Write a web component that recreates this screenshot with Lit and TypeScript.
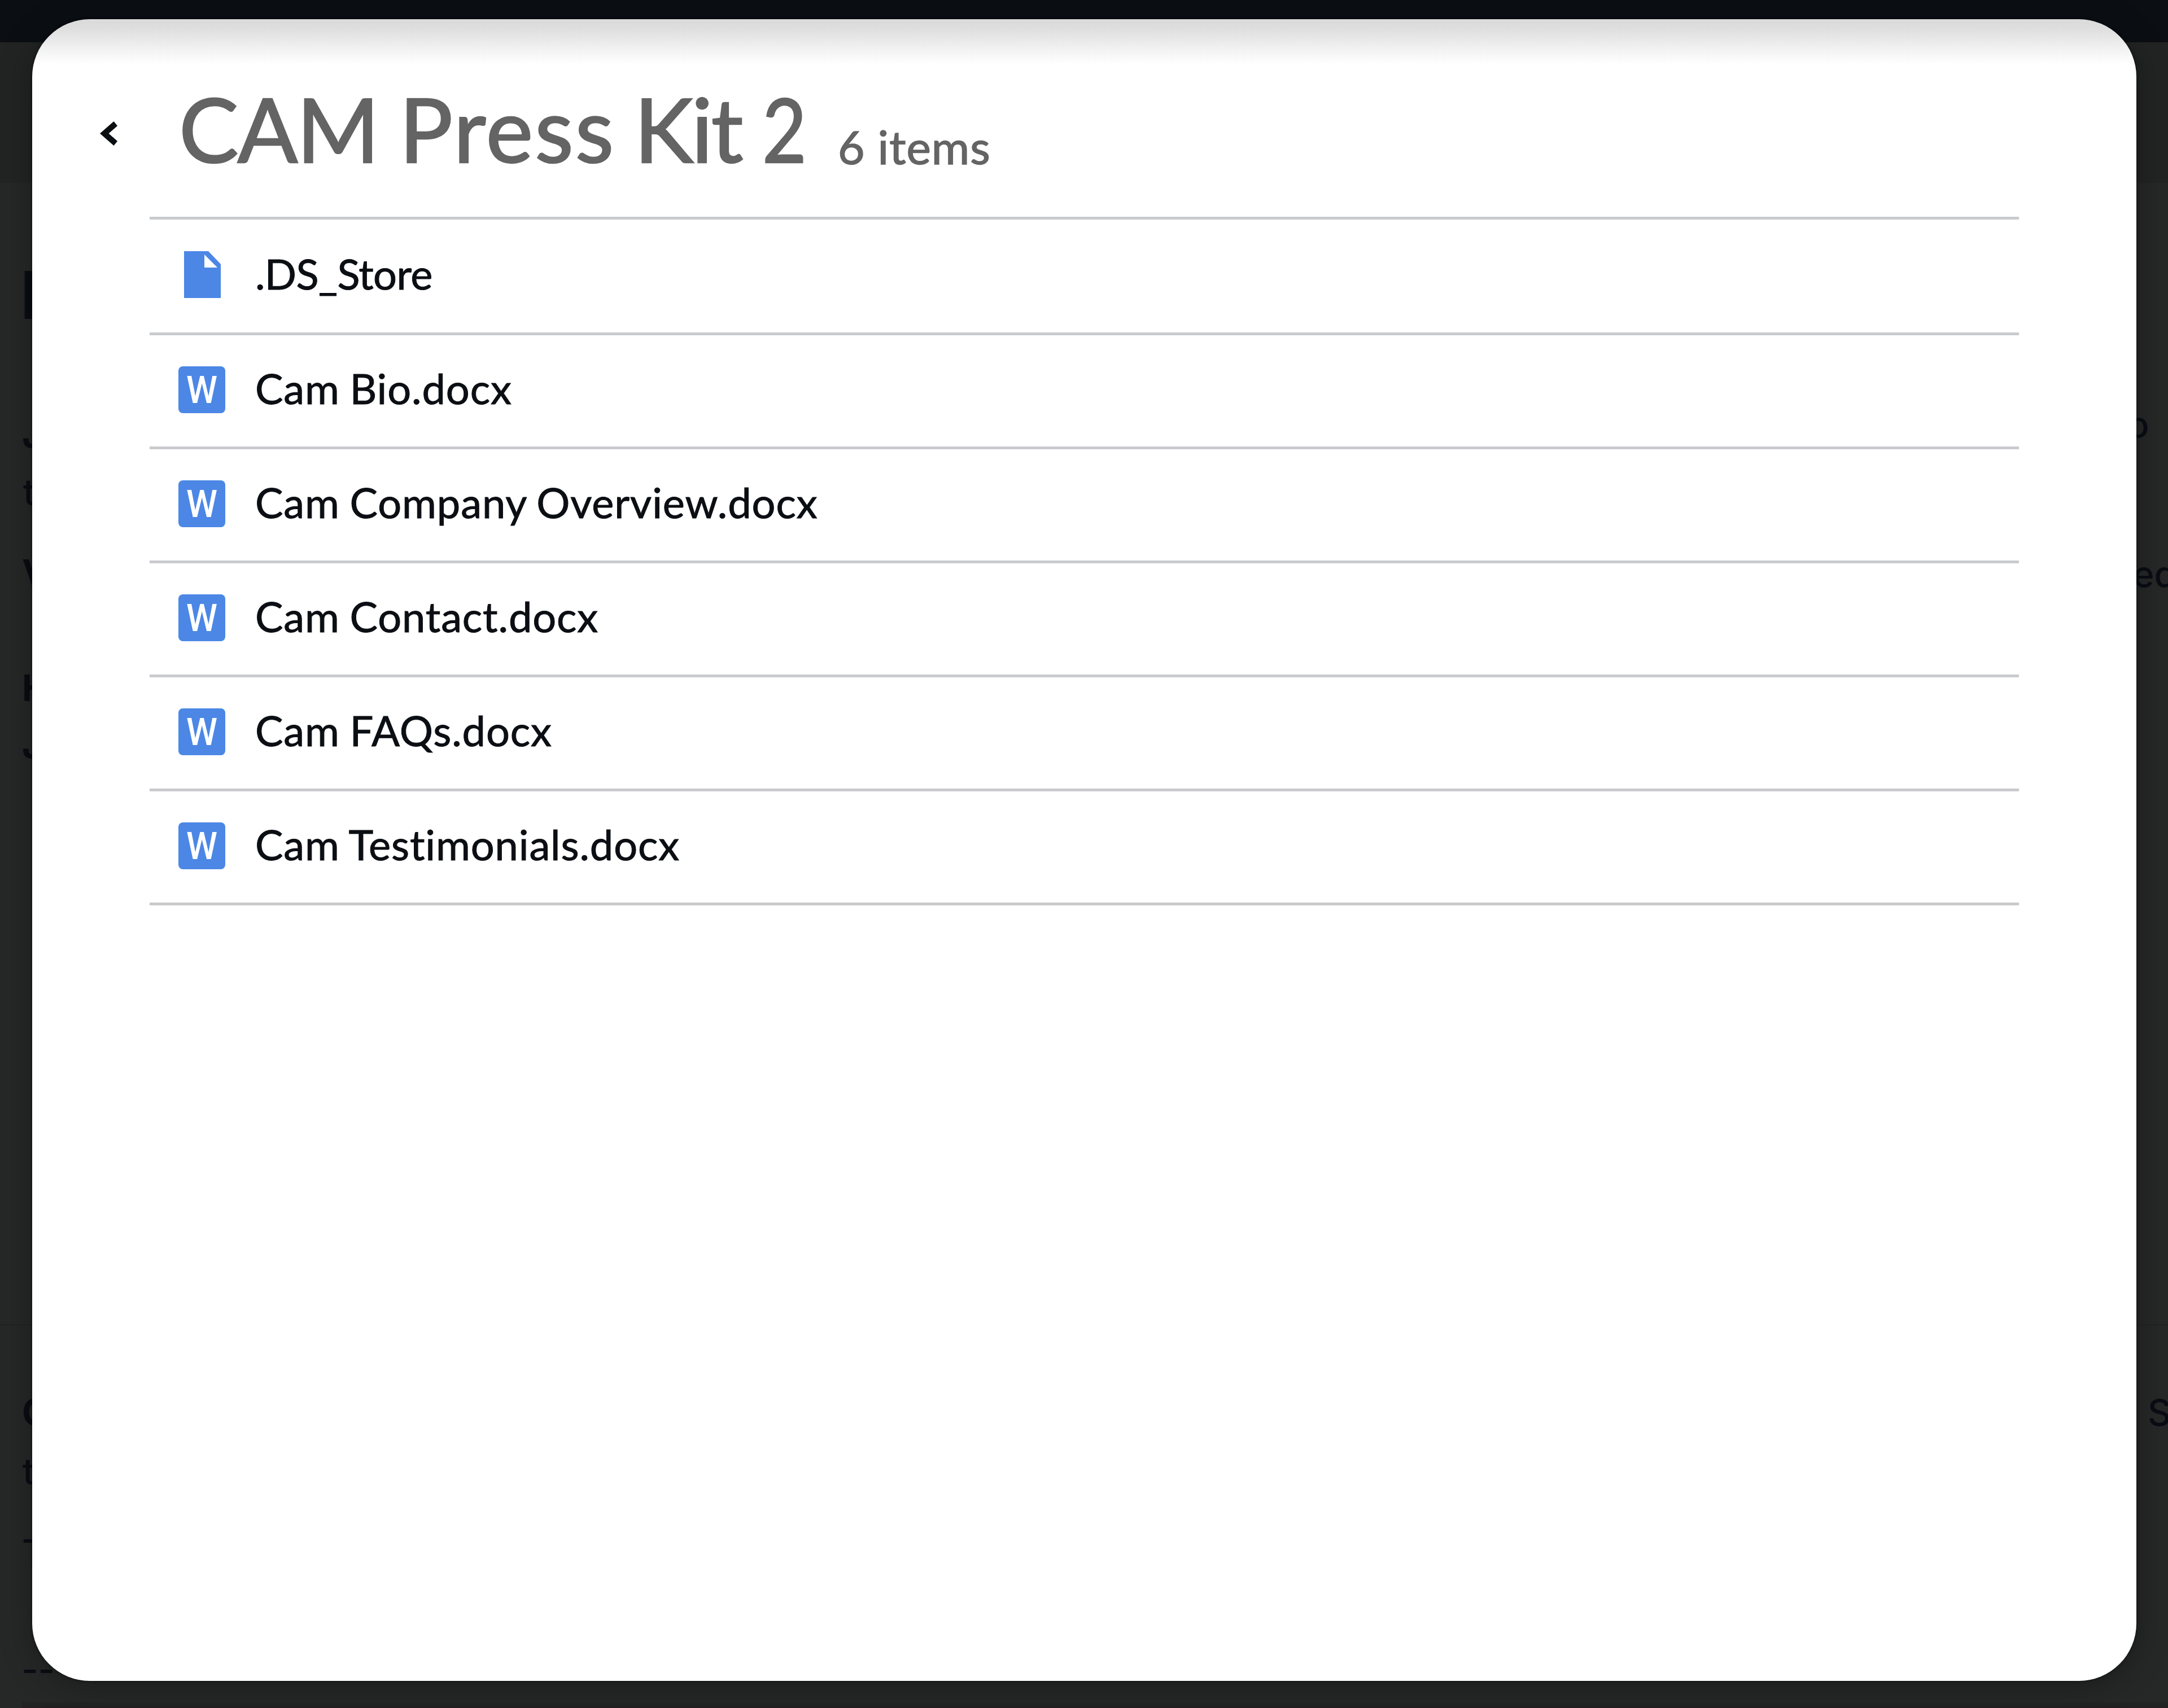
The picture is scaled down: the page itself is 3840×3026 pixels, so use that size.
import { html, svg, LitElement, css } from "lit";
import { customElement, property } from "lit/decorators.js";

interface FileItem {
  name: string;
  type: "file" | "word";
}

const FILES: FileItem[] = [
  { name: ".DS_Store", type: "file" },
  { name: "Cam Bio.docx", type: "word" },
  { name: "Cam Company Overview.docx", type: "word" },
  { name: "Cam Contact.docx", type: "word" },
  { name: "Cam FAQs.docx", type: "word" },
  { name: "Cam Testimonials.docx", type: "word" },
];

// dimmed page text that sticks out on both sides of the dialog
const PAGE_TEXT = [
  { x: 36, y: 565, text: "P", cls: "heading" },
  { x: 39, y: 793, text: "J", cls: "bold" },
  { x: 41, y: 895, text: "t", cls: "medium" },
  { x: 39, y: 1038, text: "V", cls: "bold" },
  { x: 39, y: 1242, text: "H", cls: "bold" },
  { x: 39, y: 1343, text: "J", cls: "bold" },
  { x: 39, y: 2525, text: "C", cls: "bold" },
  { x: 40, y: 2630, text: "t", cls: "medium" },
  { x: 39, y: 2774, text: "T", cls: "medium" },
  { x: 38, y: 2981, text: "--", cls: "medium" },
  { x: 3768, y: 775, text: "o", cls: "medium" },
  { x: 3778, y: 1040, text: "ed", cls: "medium" },
  { x: 3804, y: 2526, text: "S", cls: "medium" },
];

@customElement("file-icon")
export class FileIcon extends LitElement {
  @property() type = "file";

  static styles = css`
    :host {
      display: block;
      width: 83px;
      height: 83px;
    }
    svg {
      display: block;
    }
    .shape {
      fill: #4c87e6;
    }
    .letter {
      fill: #fff;
      font: 500 66px Roboto, sans-serif;
    }
    .fold {
      fill: #fff;
    }
  `;

  render() {
    return html`
      <svg width="83" height="83" viewBox="0 0 83 83">
        ${this.type === "word"
          ? svg`
              <rect class="shape" width="83" height="83" rx="8"></rect>
              <text class="letter" x="14" y="65" textLength="55" lengthAdjust="spacingAndGlyphs">W</text>
            `
          : svg`
              <path class="shape" d="M10 0H53L75 23V83H10Z"></path>
              <path class="fold" d="M46 6V29H69Z"></path>
            `}
      </svg>
    `;
  }
}

@customElement("app-root")
export class AppRoot extends LitElement {
  static styles = css`
    :host {
      display: block;
      position: relative;
      width: 3840px;
      height: 3026px;
      overflow: hidden;
      font-family: Lato, sans-serif;
      color: #0b0e13;
    }

    .page {
      display: block;
      background: #262727;
    }
    .page text {
      fill: #090d13;
      font-family: Inter, sans-serif;
      font-size: 64px;
    }
    .page .medium {
      font-weight: 500;
    }
    .page .bold {
      font-weight: 700;
    }
    .page .heading {
      font-size: 117px;
      font-weight: 700;
    }

    .dialog {
      position: absolute;
      left: 57px;
      top: 34px;
      box-sizing: border-box;
      width: 3727px;
      height: 2944px;
      padding: 0 208px 0 0;
      border-radius: 102px;
      background: linear-gradient(#dadada 0, #dedede 16px, #efefef 48px, #fff 80px);
      box-shadow: 0 0 5px rgba(0, 0, 0, 0.6), 0 8px 60px rgba(0, 0, 0, 0.3);
    }

    .header {
      display: flex;
      align-items: flex-start;
      height: 350px;
    }
    .back {
      display: block;
      width: 31px;
      height: 43px;
      margin: 181px 109px 0 120px;
    }
    .title {
      display: flex;
      gap: 37px;
      margin: 0;
      padding-top: 93px;
      font-size: 158px;
      line-height: 200px;
      font-weight: 400;
      color: #646464;
      -webkit-text-stroke: 2.5px #646464;
      white-space: nowrap;
    }
    .title .w0 {
      letter-spacing: -2px;
    }
    .title .w1 {
      letter-spacing: 3px;
      margin-right: -4px;
    }
    .title .w2 {
      letter-spacing: -3px;
    }
    /* narrow figure */
    .title .w3 {
      transform: scaleX(0.86);
      transform-origin: left;
    }
    .count {
      margin: 176px 0 0 42px;
      font-size: 82px;
      line-height: 98px;
      letter-spacing: 1px;
      color: #646464;
      -webkit-text-stroke: 1.5px #646464;
      white-space: nowrap;
    }

    .list {
      margin: 0 0 0 208px;
      padding: 0;
      list-style: none;
      border-top: 5px solid #c9cacd;
    }
    .row {
      display: flex;
      align-items: center;
      box-sizing: border-box;
      height: 202px;
      padding: 0 0 5px 51px;
      gap: 53px;
      border-bottom: 5px solid #c9cacd;
    }
    .row:first-child {
      height: 205px;
    }
    .name {
      padding-bottom: 4px;
      font-size: 74px;
      line-height: 90px;
      letter-spacing: 0.9px;
      word-spacing: -2px;
      -webkit-text-stroke: 1px #0b0e13;
      white-space: nowrap;
    }
    .row:first-child .name {
      letter-spacing: -0.6px;
    }
  `;

  render() {
    return html`
      <svg class="page" width="3840" height="3026" viewBox="0 0 3840 3026">
        <rect width="3840" height="324" fill="#222423"></rect>
        <rect width="3840" height="75" fill="#0b0f14"></rect>
        <rect y="2346" width="3840" height="2" fill="#222222"></rect>
        <rect x="39" y="3016" width="3801" height="10" fill="#222323"></rect>
        <rect x="39" y="3024" width="3801" height="2" fill="#261d20"></rect>
        ${PAGE_TEXT.map(
          (t) => svg`<text class=${t.cls} x=${t.x} y=${t.y}>${t.text}</text>`
        )}
      </svg>
      <div class="dialog">
        <div class="header">
          <svg class="back" viewBox="0 0 31 43">
            <path d="M24.500 0L31 8L15.500 21.500L31 35L24.500 43L0 21.500Z" fill="#0b0e13"></path>
          </svg>
          <h1 class="title">
            ${["CAM", "Press", "Kit", "2"].map(
              (word, i) => html`<span class="w${i}">${word}</span>`
            )}
          </h1>
          <span class="count">${FILES.length} items</span>
        </div>
        <ul class="list">
          ${FILES.map(
            (file) => html`
              <li class="row">
                <file-icon type=${file.type}></file-icon>
                <span class="name">${file.name}</span>
              </li>
            `
          )}
        </ul>
      </div>
    `;
  }
}
